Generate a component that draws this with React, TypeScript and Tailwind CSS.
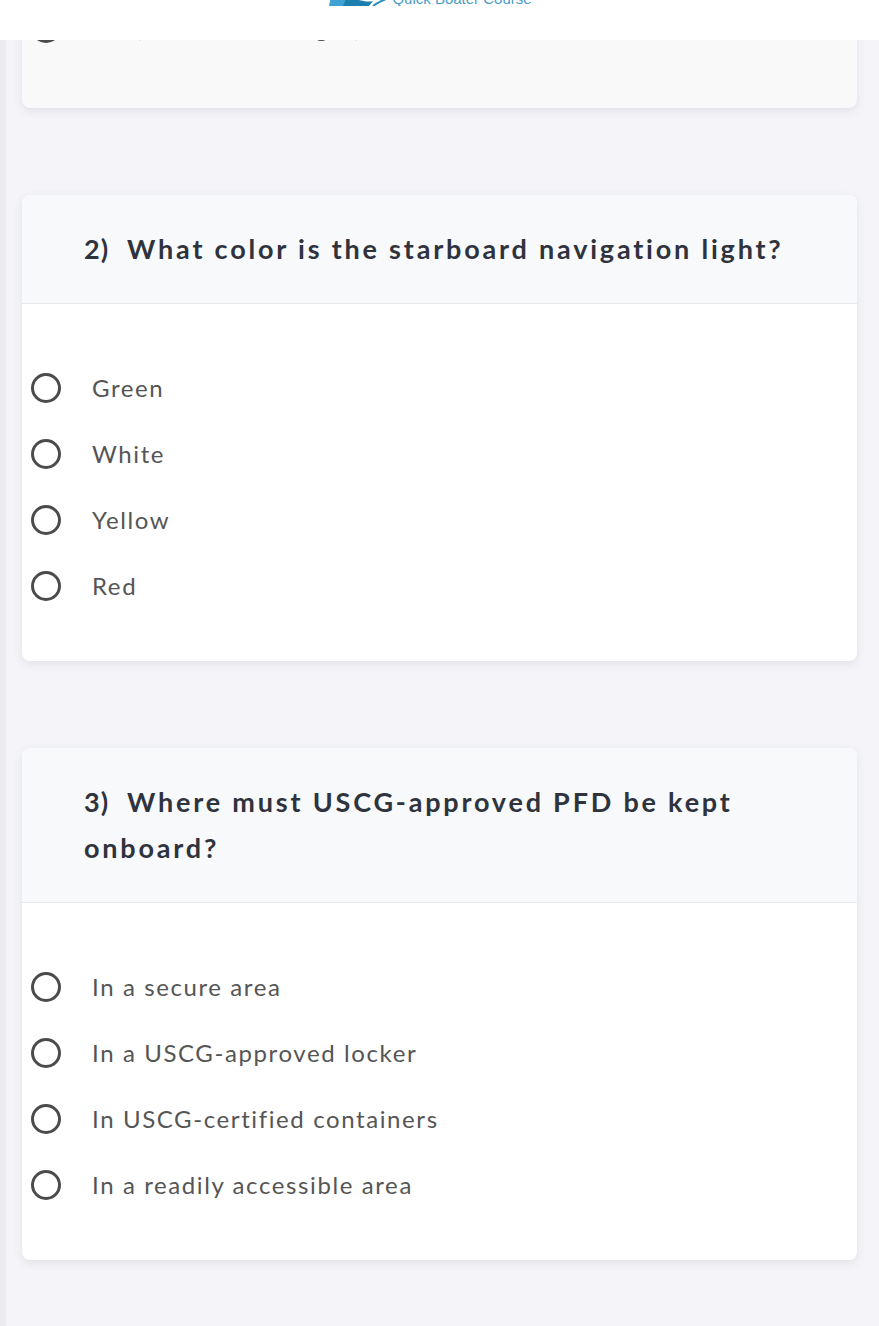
import React from "react";

type Question = {
  n: number;
  text: string;
  options: string[];
};

const questions: Question[] = [
  {
    n: 2,
    text: "What color is the starboard navigation light?",
    options: ["Green", "White", "Yellow", "Red"],
  },
  {
    n: 3,
    text: "Where must USCG-approved PFD be kept onboard?",
    options: [
      "In a secure area",
      "In a USCG-approved locker",
      "In USCG-certified containers",
      "In a readily accessible area",
    ],
  },
];

const font = { fontFamily: "Lato, 'Open Sans', Arial, sans-serif" };

function Option({ label }: { label: string }) {
  return (
    <label className="flex h-[66px] cursor-pointer items-center">
      <span className="ml-[9px] h-[30px] w-[30px] shrink-0 rounded-full border-[3px] border-[#4b4b4b] bg-white" />
      <span className="ml-[31px] text-[24px] leading-none tracking-[1.6px] text-[#555555]">
        {label}
      </span>
    </label>
  );
}

function QuestionCard({ q }: { q: Question }) {
  return (
    <section className="overflow-hidden rounded-[8px] bg-white shadow-[0_3px_10px_rgba(40,40,70,0.10)]">
      <header className="border-b border-[#e7e8ec] bg-[#f8f9fb] py-[31px] pl-[62px] pr-[40px]">
        <h2 className="text-[27px] font-bold leading-[46px] tracking-[2.8px] text-[#2f333d]">
          <span className="mr-[18px] tracking-[1px]">{q.n})</span>
          {q.text}
        </h2>
      </header>
      <div className="pb-[42px] pt-[51px]">
        {q.options.map((o) => (
          <Option key={o} label={o} />
        ))}
      </div>
    </section>
  );
}

function Logo() {
  return (
    <div className="flex h-[6px] items-end gap-[5px] overflow-hidden">
      <svg width="58" height="30" viewBox="0 0 58 30" className="shrink-0">
        <path d="M2 20 L20 23 L16 30 L0 30 Z" fill="#3ea3d4" />
        <path d="M18 21 C28 23 36 27 44 25 L40 30 L14 30 Z" fill="#1d7fae" />
        <path d="M44 30 C48 27 52 25 57 23" stroke="#2a8fc0" strokeWidth="2" fill="none" />
      </svg>
      <span
        className="text-[15px] leading-[15px] text-[#4b9cc6]"
        style={{ fontFamily: "'Liberation Sans', Arial, sans-serif" }}
      >
        Quick Boater Course
      </span>
    </div>
  );
}

export default function App() {
  return (
    <div
      className="relative min-h-screen bg-[#f5f5f9] shadow-[inset_6px_0_0_#ebebf0]"
      style={font}
    >
      <div className="fixed inset-x-0 top-0 z-10 flex h-[40px] justify-center bg-white pr-[18px]">
        <Logo />
      </div>

      <main className="-mt-[5px] flex flex-col gap-[87px] px-[22px] pb-[66px]">
        {/* tail of the previous question, scrolled under the header */}
        <section className="rounded-b-[8px] bg-[#f9f9fa] pb-[47px] shadow-[0_3px_10px_rgba(40,40,70,0.10)]">
          <Option label="On (anchored at night)" />
        </section>

        {questions.map((q) => (
          <QuestionCard key={q.n} q={q} />
        ))}
      </main>
    </div>
  );
}
